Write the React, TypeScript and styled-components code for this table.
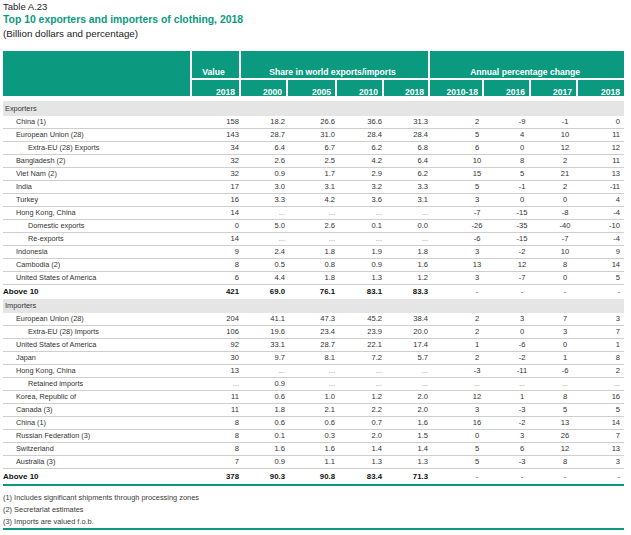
import React from 'react';
import styled, { createGlobalStyle } from 'styled-components';

const TEAL = '#0b9a7f';

const GlobalStyle = createGlobalStyle`
  body {
    margin: 0;
    background: #fff;
    font-family: 'Liberation Sans', Arial, sans-serif;
    color: #333;
  }
`;

const Page = styled.div`
  width: 621px;
  padding: 1px 7px 0 3px;
`;

const Caption = styled.div`
  font-size: 9.5px;
  line-height: 12px;
  color: #222;
`;

const Title = styled.h1`
  margin: 0;
  font-size: 10.4px;
  line-height: 14px;
  font-weight: 700;
  color: ${TEAL};
`;

const Subtitle = styled.div`
  font-size: 9.8px;
  line-height: 13px;
  color: #222;
  margin-bottom: 11px;
`;

const Table = styled.table`
  width: 621px;
  border-collapse: separate;
  border-spacing: 0;
  table-layout: fixed;
`;

const HeadCell = styled.th<{ $top?: boolean; $align?: string; $last?: boolean }>`
  box-sizing: border-box;
  height: ${(p) => (p.$top ? '29px' : '21px')};
  padding: 0 4px ${(p) => (p.$top ? '1px' : '0')} 0;
  background: ${TEAL};
  background-clip: padding-box;
  border-right: ${(p) => (p.$last ? '0' : '2px solid #fff')};
  border-bottom: ${(p) => (p.$top ? '2px' : '5px')} solid #fff;
  vertical-align: bottom;
  text-align: ${(p) => p.$align || 'right'};
  color: #fff;
  font-size: 8.6px;
  line-height: ${(p) => (p.$top ? '10px' : '8px')};
  font-weight: 700;
  white-space: nowrap;
`;

const LabelHead = styled.th`
  box-sizing: border-box;
  background: ${TEAL};
  background-clip: padding-box;
  border-right: 2px solid #fff;
  border-bottom: 5px solid #fff;
`;

const BandCell = styled.td<{ $h: number }>`
  box-sizing: border-box;
  height: ${(p) => p.$h}px;
  padding: 0 0 0 2px;
  background: #e5e5e5;
  font-size: 7.4px;
  line-height: ${(p) => p.$h}px;
  color: #333;
`;

const Row = styled.tr<{ $total?: boolean; $end?: boolean }>`
  & > td {
    box-sizing: border-box;
    height: ${(p) => (p.$end ? '17px' : p.$total ? '14px' : '13px')};
    border-bottom: ${(p) => (p.$end ? `2px solid ${TEAL}` : p.$total ? '0' : '1px solid #cfcfcf')};
    font-weight: ${(p) => (p.$total ? 700 : 400)};
    vertical-align: middle;
    white-space: nowrap;
  }
`;

const LabelCell = styled.td<{ $level: number; $total?: boolean }>`
  padding: 0 0 0 ${(p) => (p.$total ? 0 : p.$level === 2 ? 25 : 13)}px;
  font-size: ${(p) => (p.$total ? '8px' : '7.3px')};
  line-height: 12px;
  color: ${(p) => (p.$total ? '#111' : '#333')};
`;

const NumCell = styled.td<{ $pr: number; $muted?: boolean; $total?: boolean }>`
  padding: 0 ${(p) => p.$pr}px 0 0;
  text-align: right;
  font-size: ${(p) => (p.$total ? '7.8px' : '7.6px')};
  line-height: 12px;
  color: ${(p) => (p.$muted ? '#8a8a8a' : p.$total ? '#111' : '#333')};
`;

const Figure = styled.span<{ $w: number }>`
  display: inline-block;
  min-width: ${(p) => p.$w}px;
  text-align: center;
`;

const Notes = styled.div`
  width: 621px;
  padding-top: 6px;
  border-bottom: 2px solid ${TEAL};
`;

const Note = styled.div`
  font-size: 7.4px;
  line-height: 12px;
  color: #3a3a3a;
`;

const colWidths = [189, 49, 47, 49, 47, 46, 54, 47, 47, 46];

// right padding and centering box of each numeric column
const numCols = [
  { pr: 2, w: 0 },
  { pr: 3, w: 0 },
  { pr: 2, w: 0 },
  { pr: 2, w: 0 },
  { pr: 2, w: 0 },
  { pr: 1, w: 12 },
  { pr: 3, w: 12 },
  { pr: 7, w: 12 },
  { pr: 4, w: 0 },
];

type Line = { label: string; level?: number; total?: boolean; values: string[] };

const exporters: Line[] = [
  { label: 'China (1)', values: ['158', '18.2', '26.6', '36.6', '31.3', '2', '-9', '-1', '0'] },
  { label: 'European Union (28)', values: ['143', '28.7', '31.0', '28.4', '28.4', '5', '4', '10', '11'] },
  { label: 'Extra-EU (28) Exports', level: 2, values: ['34', '6.4', '6.7', '6.2', '6.8', '6', '0', '12', '12'] },
  { label: 'Bangladesh (2)', values: ['32', '2.6', '2.5', '4.2', '6.4', '10', '8', '2', '11'] },
  { label: 'Viet Nam (2)', values: ['32', '0.9', '1.7', '2.9', '6.2', '15', '5', '21', '13'] },
  { label: 'India', values: ['17', '3.0', '3.1', '3.2', '3.3', '5', '-1', '2', '-11'] },
  { label: 'Turkey', values: ['16', '3.3', '4.2', '3.6', '3.1', '3', '0', '0', '4'] },
  { label: 'Hong Kong, China', values: ['14', '...', '...', '...', '...', '-7', '-15', '-8', '-4'] },
  { label: 'Domestic exports', level: 2, values: ['0', '5.0', '2.6', '0.1', '0.0', '-26', '-35', '-40', '-10'] },
  { label: 'Re-exports', level: 2, values: ['14', '...', '...', '...', '...', '-6', '-15', '-7', '-4'] },
  { label: 'Indonesia', values: ['9', '2.4', '1.8', '1.9', '1.8', '3', '-2', '10', '9'] },
  { label: 'Cambodia (2)', values: ['8', '0.5', '0.8', '0.9', '1.6', '13', '12', '8', '14'] },
  { label: 'United States of America', values: ['6', '4.4', '1.8', '1.3', '1.2', '3', '-7', '0', '5'] },
  { label: 'Above 10', total: true, values: ['421', '69.0', '76.1', '83.1', '83.3', '-', '-', '-', '-'] },
];

const importers: Line[] = [
  { label: 'European Union (28)', values: ['204', '41.1', '47.3', '45.2', '38.4', '2', '3', '7', '3'] },
  { label: 'Extra-EU (28) Imports', level: 2, values: ['106', '19.6', '23.4', '23.9', '20.0', '2', '0', '3', '7'] },
  { label: 'United States of America', values: ['92', '33.1', '28.7', '22.1', '17.4', '1', '-6', '0', '1'] },
  { label: 'Japan', values: ['30', '9.7', '8.1', '7.2', '5.7', '2', '-2', '1', '8'] },
  { label: 'Hong Kong, China', values: ['13', '...', '...', '...', '...', '-3', '-11', '-6', '2'] },
  { label: 'Retained imports', level: 2, values: ['...', '0.9', '...', '...', '...', '...', '...', '...', '...'] },
  { label: 'Korea, Republic of', values: ['11', '0.6', '1.0', '1.2', '2.0', '12', '1', '8', '16'] },
  { label: 'Canada (3)', values: ['11', '1.8', '2.1', '2.2', '2.0', '3', '-3', '5', '5'] },
  { label: 'China (1)', values: ['8', '0.6', '0.6', '0.7', '1.6', '16', '-2', '13', '14'] },
  { label: 'Russian Federation (3)', values: ['8', '0.1', '0.3', '2.0', '1.5', '0', '3', '26', '7'] },
  { label: 'Switzerland', values: ['8', '1.6', '1.6', '1.4', '1.4', '5', '6', '12', '13'] },
  { label: 'Australia (3)', values: ['7', '0.9', '1.1', '1.3', '1.3', '5', '-3', '8', '3'] },
  { label: 'Above 10', total: true, values: ['378', '90.3', '90.8', '83.4', '71.3', '-', '-', '-', '-'] },
];

const years = ['2018', '2000', '2005', '2010', '2018', '2010-18', '2016', '2017', '2018'];

const DataRow: React.FC<{ line: Line; end?: boolean }> = ({ line, end }) => (
  <Row $total={line.total} $end={end}>
    <LabelCell $level={line.level || 1} $total={line.total}>
      {line.label}
    </LabelCell>
    {line.values.map((v, i) => (
      <NumCell key={i} $pr={numCols[i].pr} $muted={v === '...' || v === '-'} $total={line.total}>
        <Figure $w={numCols[i].w}>{v}</Figure>
      </NumCell>
    ))}
  </Row>
);

const App: React.FC = () => {
  return (
    <Page>
      <GlobalStyle />
      <Caption>Table A.23</Caption>
      <Title>Top 10 exporters and importers of clothing, 2018</Title>
      <Subtitle>(Billion dollars and percentage)</Subtitle>

      <Table>
        <colgroup>
          {colWidths.map((w, i) => (
            <col key={i} style={{ width: w }} />
          ))}
        </colgroup>
        <thead>
          <tr>
            <LabelHead rowSpan={2} />
            <HeadCell $top $align="center">Value</HeadCell>
            <HeadCell $top $align="center" colSpan={4}>
              Share in world exports/imports
            </HeadCell>
            <HeadCell $top $align="center" colSpan={4} $last>
              Annual percentage change
            </HeadCell>
          </tr>
          <tr>
            {years.map((y, i) => (
              <HeadCell key={i} $last={i === years.length - 1}>
                {y}
              </HeadCell>
            ))}
          </tr>
        </thead>
        <tbody>
          <tr>
            <BandCell $h={15} colSpan={10}>Exporters</BandCell>
          </tr>
          {exporters.map((l, i) => (
            <DataRow key={i} line={l} />
          ))}
          <tr>
            <BandCell $h={14} colSpan={10}>Importers</BandCell>
          </tr>
          {importers.map((l, i) => (
            <DataRow key={i} line={l} end={i === importers.length - 1} />
          ))}
        </tbody>
      </Table>

      <Notes>
        <Note>(1) Includes significant shipments through processing zones</Note>
        <Note>(2) Secretariat estimates</Note>
        <Note>(3) Imports are valued f.o.b.</Note>
      </Notes>
    </Page>
  );
};

export default App;
